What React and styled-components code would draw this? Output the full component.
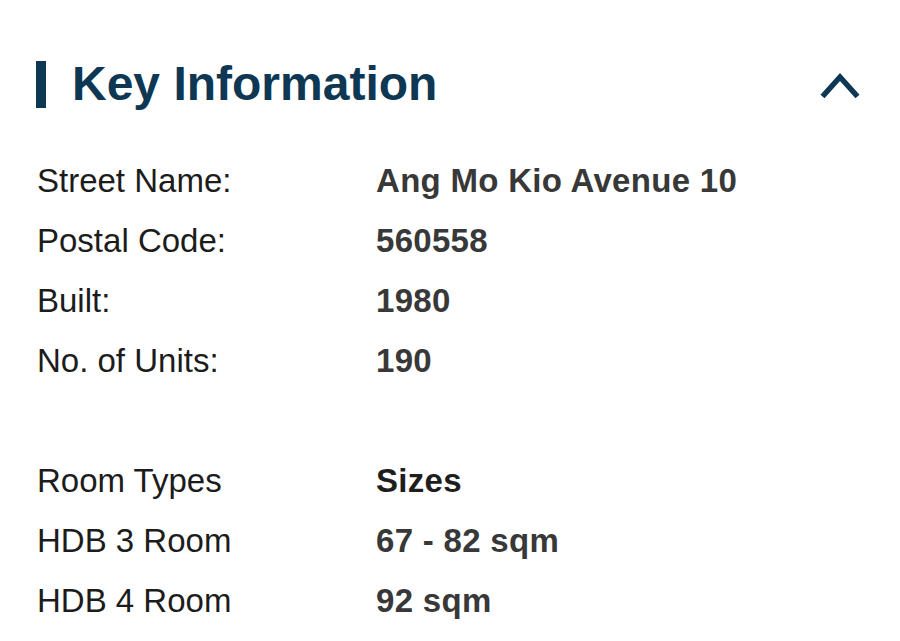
import React from "react";
import styled, { createGlobalStyle } from "styled-components";

const Global = createGlobalStyle`
  html, body { margin: 0; padding: 0; background: #ffffff; }
  body { font-family: "Liberation Sans", Arial, Helvetica, sans-serif; }
`;

const Panel = styled.section`
  padding: 54px 40px 0 37px;
  box-sizing: border-box;
  width: 900px;
`;

const Header = styled.div`
  display: flex;
  align-items: center;
  justify-content: space-between;
  height: 60px;
`;

const TitleWrap = styled.div`
  display: flex;
  align-items: center;
  gap: 26px;
`;

const Bar = styled.span`
  display: block;
  width: 10px;
  height: 47px;
  background: #0e3754;
  margin-left: -1px;
`;

const Title = styled.h2`
  margin: 0;
  font-size: 48px;
  font-weight: 700;
  color: #0e3754;
  line-height: 60px;
`;

const Toggle = styled.button`
  border: 0;
  background: none;
  padding: 0;
  display: flex;
  cursor: pointer;
  margin-top: 2px;
`;

const Table = styled.div`
  display: grid;
  grid-template-columns: 339px 1fr;
  margin-top: 37px;
`;

const Label = styled.div`
  font-size: 33px;
  line-height: 60px;
  color: #1c1c1c;
`;

const Value = styled.div`
  font-size: 33px;
  line-height: 60px;
  font-weight: 700;
  letter-spacing: 0.3px;
  color: ${(p) => (p.$head ? "#1e1e1e" : "#383838")};
`;

const Spacer = styled.div`
  grid-column: 1 / -1;
  height: 60px;
`;

const info = [
  ["Street Name:", "Ang Mo Kio Avenue 10"],
  ["Postal Code:", "560558"],
  ["Built:", "1980"],
  ["No. of Units:", "190"],
];

const rooms = [
  ["HDB 3 Room", "67 - 82 sqm"],
  ["HDB 4 Room", "92 sqm"],
];

export default function App() {
  return (
    <>
      <Global />
      <Panel>
        <Header>
          <TitleWrap>
            <Bar />
            <Title>Key Information</Title>
          </TitleWrap>
          <Toggle aria-label="Collapse">
            <svg width="40" height="27" viewBox="0 0 40 27">
              <polyline
                points="2.5,24.5 20,5 37.5,24.5"
                fill="none"
                stroke="#0e3754"
                strokeWidth="5.5"
                strokeLinejoin="miter"
              />
            </svg>
          </Toggle>
        </Header>
        <Table>
          {info.map(([l, v]) => (
            <React.Fragment key={l}>
              <Label>{l}</Label>
              <Value>{v}</Value>
            </React.Fragment>
          ))}
          <Spacer />
          <Label>Room Types</Label>
          <Value $head>Sizes</Value>
          {rooms.map(([l, v]) => (
            <React.Fragment key={l}>
              <Label>{l}</Label>
              <Value>{v}</Value>
            </React.Fragment>
          ))}
        </Table>
      </Panel>
    </>
  );
}
